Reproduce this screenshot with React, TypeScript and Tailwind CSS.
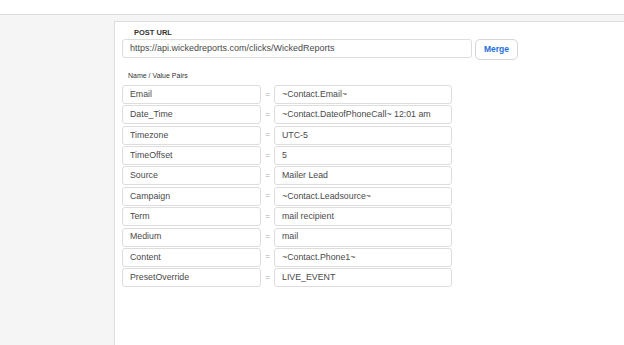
import React from "react";

const rows: [string, string][] = [
  ["Email", "~Contact.Email~"],
  ["Date_Time", "~Contact.DateofPhoneCall~ 12:01 am"],
  ["Timezone", "UTC-5"],
  ["TimeOffset", "5"],
  ["Source", "Mailer Lead"],
  ["Campaign", "~Contact.Leadsource~"],
  ["Term", "mail recipient"],
  ["Medium", "mail"],
  ["Content", "~Contact.Phone1~"],
  ["PresetOverride", "LIVE_EVENT"],
];

export default function App() {
  return (
    <div className="w-[624px] h-[345px] overflow-hidden bg-[#f5f5f5] flex flex-col font-['Liberation_Sans',Arial,sans-serif]">
      <div className="h-[15px] shrink-0 bg-white border-b border-[#dddddd]" />
      <div className="flex-1 pl-[114px] pt-[6px]">
        <div className="h-full bg-white border border-r-0 border-b-0 border-[#dddddd] pl-[7px] pt-[6px]">
          <div className="pl-[12px] text-[7.5px] leading-[10px] font-bold text-[#333]">POST URL</div>
          <div className="flex items-start gap-[3px] mt-[1px]">
            <div className="w-[350px] h-[19px] border border-[#dddddd] rounded-[3px] flex items-center pl-[7px] text-[9px] text-[#4a4a4a]">
              https://api.wickedreports.com/clicks/WickedReports
            </div>
            <div className="w-[43px] h-[21px] border border-[#d6d6d6] rounded-[5px] flex items-center justify-center text-[8.5px] font-bold text-[#1f6fd8]">
              Merge
            </div>
          </div>
          <div className="mt-[11px] pl-[6px] text-[7px] leading-[10px] text-[#333]">Name / Value Pairs</div>
          <div className="mt-[4px] flex flex-col gap-[1.37px]">
            {rows.map(([n, v]) => (
              <div key={n} className="flex items-center h-[19px]">
                <div className="w-[139px] h-full border border-[#dddddd] rounded-[3px] flex items-center pl-[7px] text-[8.8px] text-[#4a4a4a]">
                  {n}
                </div>
                <div className="w-[13px] text-center text-[8px] text-[#aaa]">=</div>
                <div className="w-[178px] h-full border border-[#dddddd] rounded-[3px] flex items-center pl-[7px] text-[8.8px] text-[#4a4a4a]">
                  {v}
                </div>
              </div>
            ))}
          </div>
        </div>
      </div>
    </div>
  );
}
